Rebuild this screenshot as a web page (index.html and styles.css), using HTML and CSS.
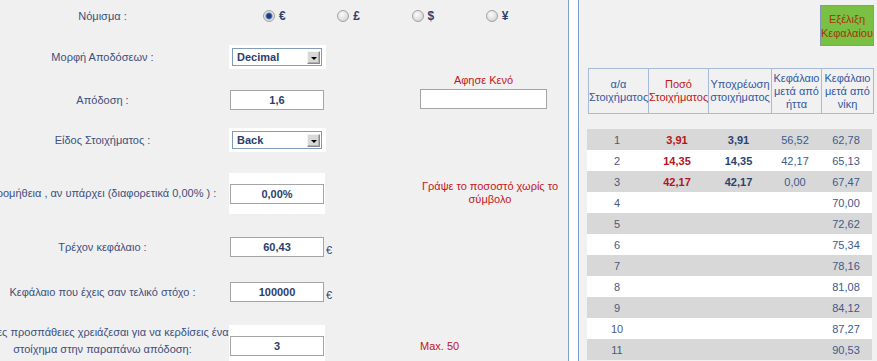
FILE: index.html
```html
<!DOCTYPE html>
<html lang="el">
<head>
<meta charset="utf-8">
<title>Εξέλιξη Κεφαλαίου</title>
<link rel="stylesheet" href="styles.css">
</head>
<body>
<div class="page">
  <section class="form-panel">
    <div class="form">
      <div class="row r1">
        <div class="label"><span>Νόμισμα :</span></div>
        <div class="radios">
          <div class="radio-item"><span class="radio checked"></span><span class="cur">€</span></div>
          <div class="radio-item"><span class="radio"></span><span class="cur">£</span></div>
          <div class="radio-item"><span class="radio"></span><span class="cur">$</span></div>
          <div class="radio-item"><span class="radio"></span><span class="cur">¥</span></div>
        </div>
      </div>
      <div class="row r2">
        <div class="label"><span>Μορφή Αποδόσεων :</span></div>
        <div class="sel-cell"><div class="select"><span>Decimal</span><span class="drop"></span></div></div>
      </div>
      <div class="row r3">
        <div class="label"><span>Απόδοση :</span></div>
        <div class="input">1,6</div>
        <div class="note-col"><div class="note">Αφησε Κενό</div><div class="input wide"></div></div>
      </div>
      <div class="row r4">
        <div class="label"><span>Είδος Στοιχήματος :</span></div>
        <div class="sel-cell"><div class="select"><span>Back</span><span class="drop"></span></div></div>
      </div>
      <div class="row r5">
        <div class="label"><span>Προμήθεια , αν υπάρχει (διαφορετικά 0,00% ) :</span></div>
        <div class="in-cell"><div class="input">0,00%</div></div>
        <div class="note wrap"><span>Γράψε το ποσοστό χωρίς το</span><span>σύμβολο</span></div>
      </div>
      <div class="row r6">
        <div class="label"><span>Τρέχον κεφάλαιο :</span></div>
        <div class="input">60,43</div>
        <div class="unit">€</div>
      </div>
      <div class="row r7">
        <div class="label"><span>Κεφάλαιο που έχεις σαν τελικό στόχο :</span></div>
        <div class="input">100000</div>
        <div class="unit">€</div>
      </div>
      <div class="row r8">
        <div class="label two"><span>Πόσες προσπάθειες χρειάζεσαι για να κερδίσεις ένα</span><span>στοίχημα στην παραπάνω απόδοση:</span></div>
        <div class="in-cell top"><div class="input">3</div></div>
        <div class="max">Max. 50</div>
      </div>
    </div>
  </section>
  <div class="spacer"></div>
  <section class="side-panel">
    <div class="btn-row"><div class="btn">Εξέλιξη<br>Κεφαλαίου</div></div>
    <table class="head-table">
      <colgroup><col class="c1"><col class="c2"><col class="c3"><col class="c4"><col class="c5"></colgroup>
      <tr>
        <td>α/α<br>Στοιχήματος</td>
        <td class="red">Ποσό<br>Στοιχήματος</td>
        <td>Υποχρέωση<br>στοιχήματος</td>
        <td>Κεφάλαιο<br>μετά από<br>ήττα</td>
        <td>Κεφάλαιο<br>μετά από<br>νίκη</td>
      </tr>
    </table>
    <table class="data-table">
      <colgroup><col class="c1"><col class="c2"><col class="c3"><col class="c4"><col class="c5"></colgroup>
      <tr><td class="n">1</td><td class="amt">3,91</td><td class="lia">3,91</td><td>56,52</td><td>62,78</td></tr>
      <tr><td class="n">2</td><td class="amt">14,35</td><td class="lia">14,35</td><td>42,17</td><td>65,13</td></tr>
      <tr><td class="n">3</td><td class="amt">42,17</td><td class="lia">42,17</td><td>0,00</td><td>67,47</td></tr>
      <tr><td class="n">4</td><td></td><td></td><td></td><td>70,00</td></tr>
      <tr><td class="n">5</td><td></td><td></td><td></td><td>72,62</td></tr>
      <tr><td class="n">6</td><td></td><td></td><td></td><td>75,34</td></tr>
      <tr><td class="n">7</td><td></td><td></td><td></td><td>78,16</td></tr>
      <tr><td class="n">8</td><td></td><td></td><td></td><td>81,08</td></tr>
      <tr><td class="n">9</td><td></td><td></td><td></td><td>84,12</td></tr>
      <tr><td class="n">10</td><td></td><td></td><td></td><td>87,27</td></tr>
      <tr><td class="n">11</td><td></td><td></td><td></td><td>90,53</td></tr>
    </table>
  </section>
</div>
</body>
</html>
```
FILE: styles.css
```css
* { box-sizing: border-box; }
html, body { margin: 0; padding: 0; }
body {
  background: #fff;
  font-family: "Liberation Sans", Arial, sans-serif;
  font-size: 11px;
  color: #3d4f7c;
  width: 877px;
  height: 361px;
  overflow: hidden;
}
.page { display: flex; height: 361px; }

/* left form */
.form-panel {
  width: 569px;
  flex: none;
  background: #f0f0f0;
  border-right: 1px solid #7f9dc9;
  overflow: hidden;
}
.spacer { width: 9px; flex: none; background: #fff; }
.form { margin-left: -25px; display: flex; flex-direction: column; }
.row {
  display: grid;
  grid-template-columns: 255px 95px 95px 140px;
  align-items: center;
}
.r1 { height: 32px; }
.r2 { height: 50px; }
.r3 { height: 36px; }
.r4 { height: 44px; }
.r5 { height: 62px; }
.r6 { height: 46px; }
.r7 { height: 44px; }
.r8 { height: 48px; }

.label {
  display: flex;
  flex-direction: column;
  align-items: center;
  line-height: 14px;
  color: #3d4f7c;
}
.label span { white-space: nowrap; }
.label.two { line-height: 17px; }

.radios { grid-column: 2 / 5; display: flex; padding-left: 33px; }
.radio-item { width: 78px; display: flex; align-items: center; gap: 4px; }
.radio {
  width: 12px; height: 12px; border-radius: 50%;
  border: 1px solid #a2a2a2;
  background: radial-gradient(circle at 40% 35%, #fbfbfb, #dcdcdc 65%, #c6c6c6);
}
.radio.checked {
  background: radial-gradient(circle, #1d3b78 0 2px, #5a7fbd 3px, #e6e6e6 4px, #cfcfcf 100%);
}
.cur { font-weight: bold; font-size: 12px; color: #2e416e; line-height: 14px; }

.sel-cell { background: #fff; padding: 3px 4px 3px 3px; width: 97px; margin-left: -1px; }
.select {
  width: 90px; height: 18px;
  border: 1px solid #7f9db9;
  background: #fff;
  display: flex; align-items: center; justify-content: space-between;
  padding: 0 1px 0 4px;
  font-weight: bold; color: #2b3e6a;
}
.drop {
  width: 13px; height: 13px;
  background: #d8d8d8;
  border: 1px solid #8a8a8a;
  border-top-color: #f4f4f4; border-left-color: #f4f4f4;
  box-shadow: inset -1px -1px 0 #b0b0b0;
  display: flex; align-items: center; justify-content: center;
  padding-top: 2px;
}
.drop::after {
  content: "";
  border-left: 3px solid transparent;
  border-right: 3px solid transparent;
  border-top: 3px solid #000;
}

.input {
  width: 94px; height: 20px;
  border: 1px solid #a5a5a5;
  background: #fff;
  text-align: center;
  font-weight: bold;
  color: #2b3e6a;
  line-height: 18px;
}
.input.wide { width: 127px; }
.in-cell { background: #fff; width: 96px; margin-left: -1px; padding: 11px 1px 10px 1px; }
.in-cell.top { align-self: start; margin-top: 11px; padding-bottom: 12px; }

.note-col {
  grid-column: 4;
  align-self: start;
  margin-top: -9px;
  width: 127px;
  display: flex; flex-direction: column; gap: 2px;
}
.note { color: #c4161c; text-align: center; line-height: 14px; }
.note.wrap {
  grid-column: 4;
  display: flex; flex-direction: column; align-items: center;
  line-height: 13px;
}
.note.wrap span { white-space: nowrap; }
.unit { color: #2e416e; padding-left: 1px; margin-top: 5px; }
.max { grid-column: 4; align-self: start; margin-top: 25px; color: #c4161c; line-height: 14px; }

/* right panel */
.side-panel {
  flex: 1;
  background: #f1f1f1;
  border-left: 1px solid #7f9dc9;
  display: flex; flex-direction: column;
  padding: 5px 4px 0 0;
}
.btn-row { display: flex; justify-content: flex-end; }
.btn {
  width: 54px; height: 41px;
  background: #79c043;
  border: 1px solid #8496b8;
  color: #a6360e;
  text-align: center;
  line-height: 14px;
  display: flex; align-items: center; justify-content: center;
}
table { border-collapse: collapse; table-layout: fixed; width: 285px; font-size: 11px; }
.c1 { width: 60px; } .c2 { width: 60px; } .c3 { width: 63px; } .c4 { width: 50px; } .c5 { width: 52px; }
.head-table { margin: 22px 0 0 9px; }
.head-table td {
  border: 1px solid #a7bad9;
  text-align: center;
  vertical-align: middle;
  line-height: 13px;
  padding: 2px 0;
  color: #3358a4;
  height: 45px;
}
.head-table td.red { color: #c4161c; }
.data-table { margin: 15px 0 0 8px; }
.data-table td {
  height: 21px;
  padding: 0;
  text-align: center;
  color: #3d5a8c;
}
.data-table tr:nth-child(odd) td { background: #d8d8d8; }
.data-table tr:nth-child(even) td { background: #fff; }
.data-table td.n { color: #4b5a78; }
.data-table td.amt { color: #b3141c; font-weight: bold; }
.data-table td.lia { color: #2c4371; font-weight: bold; }
```
